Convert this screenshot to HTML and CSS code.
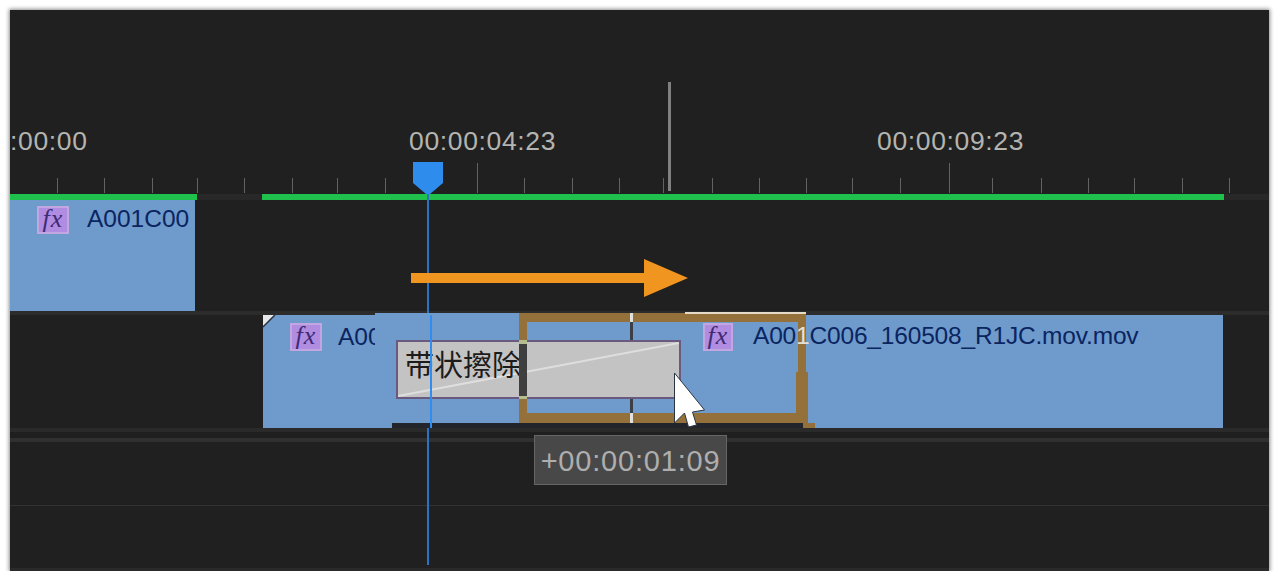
FILE: index.html
```html
<!DOCTYPE html>
<html lang="zh-CN">
<head>
  <meta charset="UTF-8">
  <title>Timeline</title>
  <link rel="stylesheet" href="styles.css">
</head>
<body>
  <div class="panel">
    <div class="ruler">
      <span class="time time-a">:00:00</span>
      <span class="time time-b">00:00:04:23</span>
      <span class="time time-c">00:00:09:23</span>
      <svg class="ticks" width="1259" height="190" viewBox="0 0 1259 190">
        <path stroke="#626262" stroke-width="1" fill="none" d="M47.5 168v15M94.5 168v15M142.5 168v15M187.5 168v15M234.5 168v15M282.5 168v15M327.5 168v15M375.5 168v15M467.5 153v30M514.5 168v15M562.5 168v15M609.5 168v15M653.5 168v15M702.5 168v15M749.5 168v15M796.5 168v15M842.5 168v15M890.5 168v15M939.5 153v30M982.5 168v15M1031.5 168v15M1078.5 168v15M1124.5 168v15M1172.5 168v15M1219.5 168v15"/>
      </svg>
      <div class="work-bar">
        <div class="work work-a"></div>
        <div class="work work-b"></div>
      </div>
    </div>

    <div class="track track-one">
      <div class="clip clip-one">
        <span class="fx">fx</span>
        <span class="clip-name">A001C00</span>
      </div>
    </div>
    <div class="divider"></div>

    <div class="track track-two">
      <div class="clip clip-two">
        <svg class="corner" width="13" height="13" viewBox="0 0 13 13">
          <path fill="#e8e8e8" d="M0 0h11L0 11z"/>
          <path stroke="#2c3440" stroke-width="1.5" fill="none" d="M12 0L0 12"/>
        </svg>
        <span class="fx">fx</span>
        <span class="clip-name">A001</span>
      </div>
    </div>
    <div class="track-edge"></div>
    <div class="track track-empty"></div>
    <div class="track track-last"></div>

    <div class="playhead-line"></div>

    <!-- dragged clip and trim box sit over the tracks -->
    <div class="moved">
      <span class="fx">fx</span>
      <span class="clip-name moved-name">A00<span class="hi">1</span>C006_160508_R1JC.mov.mov</span>
    </div>
    <div class="moved-base"></div>
    <div class="trim">
      <i class="notch notch-top"></i>
      <i class="notch notch-bottom"></i>
    </div>
    <div class="trim-line"></div>
    <div class="trim-thick"></div>
    <div class="trim-foot"></div>

    <div class="effect">
      <svg class="effect-line" width="281" height="55" viewBox="0 0 281 55">
        <path stroke="#dedede" stroke-width="2" fill="none" d="M0 54L281 1"/>
      </svg>
      <span class="effect-name">带状擦除</span>
      <div class="effect-handle"></div>
    </div>

    <div class="tooltip">+00:00:01:09</div>

    <div class="marker"></div>
    <div class="playhead-shift"></div>
    <svg class="playhead" width="30" height="32" viewBox="0 0 30 32">
      <path fill="#2d8cec" d="M0 0h30v21l-13 11h-4L0 21z"/>
    </svg>

    <svg class="arrow" width="278" height="40" viewBox="0 0 278 40">
      <path fill="#f0951f" d="M0 15h233V1l44 19-44 19V25H0z"/>
    </svg>

    <svg class="cursor" width="34" height="57" viewBox="0 0 34 57">
      <path fill="#fff" stroke="#2a3644" stroke-width="1" d="M1.5 1V51l10-10 4 14 8-2-4-13 12-2z"/>
    </svg>
  </div>
</body>
</html>
```

FILE: styles.css
```css
html, body {
  margin: 0;
  padding: 0;
  background-color: #fff;
}
.panel {
  position: relative;
  display: flex;
  flex-direction: column;
  width: 1259px;
  height: 561px;
  margin: 10px 0 0 10px;
  background-color: #202020;
  box-shadow: 0 0 4px 1px rgba(0, 0, 0, 0.45);
  font-family: "Liberation Sans", "Noto Sans CJK SC", sans-serif;
}
.ruler {
  position: relative;
  flex: 0 0 190px;
}
.time {
  position: absolute;
  top: 115px;
  font-size: 26.5px;
  line-height: 32px;
  letter-spacing: 0.65px;
  color: #b4b4b0;
  white-space: nowrap;
}
.time-a { left: 0; }
.time-b { left: 399px; }
.time-c { left: 867px; }
.ticks {
  position: absolute;
  top: 0;
  left: 0;
}
.work-bar {
  position: absolute;
  left: 0;
  right: 0;
  bottom: 0;
  height: 6px;
  background-color: #282828;
}
.work {
  position: absolute;
  top: 0;
  height: 6px;
  background-color: #1fc14c;
}
.work-a { left: 0; width: 187px; }
.work-b { left: 252px; width: 962px; }

.track {
  position: relative;
}
.track-one {
  flex: 0 0 111px;
}
.divider {
  flex: 0 0 4px;
  background-color: #2c2c2c;
}
.track-two {
  flex: 0 0 113px;
  padding-left: 253px;
}
.clip {
  display: flex;
  align-items: flex-start;
  height: 100%;
  box-sizing: border-box;
  background-color: #6f9acc;
}
.clip-one {
  width: 185px;
  padding: 6px 0 0 27px;
}
.clip-two {
  position: relative;
  width: 960px;
  padding: 8px 0 0 27px;
}
.clip-one .clip-name {
  margin-top: -1px;
}
.clip-two .fx {
  margin-right: 16px;
}
.corner {
  position: absolute;
  top: 0;
  left: 0;
}
.fx {
  flex: none;
  width: 28px;
  height: 24px;
  margin-right: 18px;
  border: 2px solid #c2a6e2;
  background-color: #b18de2;
  font-family: "Liberation Serif", serif;
  font-style: italic;
  font-size: 26px;
  line-height: 22px;
  letter-spacing: 1px;
  text-align: center;
  color: #3f2a74;
}
.clip-name {
  font-size: 24.5px;
  line-height: 28px;
  color: #0a2560;
  white-space: nowrap;
}
.moved-name {
  position: relative;
  z-index: 1;
  margin-top: -1px;
  letter-spacing: -0.18px;
}
.hi {
  color: #e4e0d6;
}
.track-edge {
  flex: 0 0 14px;
  background: linear-gradient(#2a2a2a 0, #2a2a2a 4px, #1f1f1f 4px, #1f1f1f 10px, #303030 10px);
}
.track-empty {
  flex: 0 0 63px;
  border-bottom: 1px solid #323232;
}
.track-last {
  flex: 1;
  border-bottom: 3px solid #2a2a2a;
}

.moved {
  position: absolute;
  left: 365px;
  top: 303px;
  display: flex;
  align-items: flex-start;
  width: 431px;
  height: 110px;
  padding: 10px 0 0 328px;
  box-sizing: border-box;
  background-color: #6f9acc;
}
.moved .fx {
  width: 26px;
  margin-right: 20px;
}
.moved-base {
  position: absolute;
  left: 382px;
  top: 413px;
  width: 411px;
  height: 5px;
  background-color: #22262c;
}
.trim {
  position: absolute;
  left: 509px;
  top: 303px;
  width: 287px;
  height: 110px;
  box-sizing: border-box;
  border: solid #94703a;
  border-width: 9px 8px 10px 8px;
}
.notch {
  position: absolute;
  left: 103px;
  width: 3px;
  background-color: #3a3f48;
}
.notch-top {
  top: -9px;
  height: 29px;
  background: linear-gradient(#e2e0da 0, #e2e0da 9px, #3a3f48 9px);
}
.notch-bottom {
  bottom: -10px;
  height: 25px;
  background: linear-gradient(#3a3f48 0, #3a3f48 15px, #e2e0da 15px);
}
.trim-line {
  position: absolute;
  left: 675px;
  top: 302px;
  width: 121px;
  height: 2px;
  background-color: #e5dcc8;
}
.trim-thick {
  position: absolute;
  left: 786px;
  top: 362px;
  width: 12px;
  height: 51px;
  background-color: #94703a;
}
.trim-foot {
  position: absolute;
  left: 793px;
  top: 413px;
  width: 12px;
  height: 5px;
  background-color: #94703a;
}

.effect {
  position: absolute;
  left: 386px;
  top: 330px;
  width: 285px;
  height: 59px;
  padding-left: 7px;
  box-sizing: border-box;
  border: 2px solid #6a5a80;
  background-color: #c3c3c3;
}
.effect-line {
  position: absolute;
  top: 0;
  left: 0;
}
.effect-name {
  position: relative;
  font-size: 29px;
  line-height: 48px;
  color: #1c1c1c;
  white-space: nowrap;
}
.effect-handle {
  position: absolute;
  left: 121px;
  top: -2px;
  width: 8px;
  height: 59px;
  box-sizing: border-box;
  border: solid #b5bd90;
  border-width: 4px 0 3px;
  background-color: #3f3f3f;
}
.tooltip {
  position: absolute;
  left: 524px;
  top: 425px;
  width: 193px;
  height: 50px;
  box-sizing: border-box;
  border: 1px solid #666;
  background-color: #484848;
  font-size: 29px;
  line-height: 50px;
  letter-spacing: 0.8px;
  text-align: center;
  white-space: nowrap;
  color: #aeaeae;
}
.marker {
  position: absolute;
  left: 658px;
  top: 72px;
  width: 3px;
  height: 109px;
  background-color: #808080;
}
.playhead-line {
  position: absolute;
  left: 417px;
  top: 180px;
  width: 2px;
  height: 375px;
  background-color: #2a72c4;
}
.playhead-shift {
  position: absolute;
  left: 420px;
  top: 305px;
  width: 2px;
  height: 113px;
  background-color: #2f8cf0;
}
.playhead {
  position: absolute;
  left: 403px;
  top: 152px;
}
.arrow {
  position: absolute;
  left: 401px;
  top: 248px;
}
.cursor {
  position: absolute;
  left: 663px;
  top: 362px;
}
```
